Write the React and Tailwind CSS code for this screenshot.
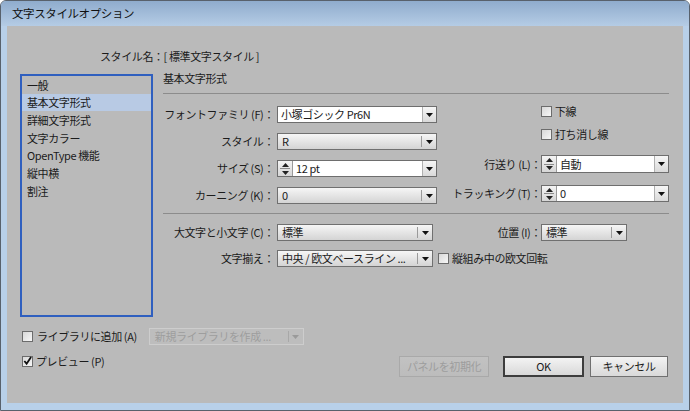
import React from "react";

function Arrow() {
  return (
    <svg width="7" height="4" viewBox="0 0 7 4" className="block">
      <polygon points="0,0 7,0 3.5,4" fill="#111" />
    </svg>
  );
}

function Spinner() {
  return (
    <span className="flex h-full w-[15px] shrink-0 flex-col border-r border-[#9a9a9a] bg-gradient-to-b from-[#f4f4f4] to-[#d6d6d6]">
      <span className="flex flex-1 items-center justify-center">
        <svg width="7" height="4" viewBox="0 0 7 4" className="block">
          <polygon points="0,4 7,4 3.5,0" fill="#222" />
        </svg>
      </span>
      <span className="mx-[2px] h-px bg-[#8a8a8a]" />
      <span className="flex flex-1 items-center justify-center">
        <svg width="7" height="4" viewBox="0 0 7 4" className="block">
          <polygon points="0,0 7,0 3.5,4" fill="#222" />
        </svg>
      </span>
    </span>
  );
}

function Combo({ className, value, spin }) {
  return (
    <div className={"flex h-[17px] shrink-0 items-stretch border border-[#6e6e6e] bg-white " + className}>
      {spin && <Spinner />}
      <span className="flex flex-1 items-center whitespace-nowrap pl-[3px] leading-[15px]">{value}</span>
      <span className="flex w-[14px] shrink-0 items-center justify-center border-l border-[#b0b0b0] bg-gradient-to-b from-[#f6f6f6] to-[#dadada]">
        <Arrow />
      </span>
    </div>
  );
}

function Select({ className, value }) {
  return (
    <div className={"flex h-[17px] shrink-0 items-center border border-[#707070] bg-gradient-to-b from-[#f6f6f6] to-[#d4d4d4] " + className}>
      <span className="flex-1 whitespace-nowrap pl-[4px] leading-[15px]">{value}</span>
      <span className="h-[11px] w-px bg-[#9a9a9a]" />
      <span className="flex w-[14px] shrink-0 items-center justify-center">
        <Arrow />
      </span>
    </div>
  );
}

function Check({ checked }) {
  return (
    <span className="inline-flex h-[11px] w-[11px] shrink-0 items-center justify-center border border-[#6c6c6c] bg-gradient-to-br from-[#d8d8d8] to-[#f7f7f7]">
      {checked && (
        <svg width="10" height="10" viewBox="0 0 10 10" className="block">
          <path d="M1.5 5 L4 8 L9 0.5" fill="none" stroke="#111" strokeWidth="2" />
        </svg>
      )}
    </span>
  );
}

function Label({ className, children }) {
  return (
    <span className={"flex shrink-0 justify-end whitespace-nowrap " + className}>{children}</span>
  );
}

function Button({ className, children, disabled, primary }) {
  let cls = "flex h-[21px] items-center justify-center bg-gradient-to-b ";
  if (disabled) cls += "border border-[#a9a9a9] from-[#c2c2c2] to-[#bcbcbc] text-[#9d9d9d] ";
  else if (primary) cls += "border-2 border-[#3d3d3d] from-[#f3f3f3] to-[#d9d9d9] ";
  else cls += "border border-[#707070] from-[#f3f3f3] to-[#d9d9d9] ";
  return <div className={cls + className}>{children}</div>;
}

const items = ["一般", "基本文字形式", "詳細文字形式", "文字カラー", "OpenType 機能", "縦中横", "割注"];

export default function App() {
  return (
    <div className="h-[411px] w-[690px] overflow-hidden font-['Noto_Sans_CJK_JP',sans-serif] text-[11px] tracking-[-0.4px] text-[#1b1b1b]">
      <div className="flex h-full flex-col rounded-t-[6px] border border-[#58616c] bg-[#b8d0e9]">
        <div className="flex h-[25px] shrink-0 items-center rounded-t-[5px] bg-gradient-to-b from-[#8faccd] to-[#b5cce5] pl-[11px] text-[11.5px] text-[#111]">
          文字スタイルオプション
        </div>
        <div className="mx-[6px] flex h-[377px] flex-col bg-[#bababa] pl-[13px] pr-[15px] pt-[22px]">
          <div className="h-[16px] pl-[80px] leading-[16px]">スタイル名：[ 標準文字スタイル ]</div>

          <div className="mt-[7px] flex h-[246px]">
            <div className="mt-[3px] h-[243px] w-[133px] shrink-0 border-2 border-[#2f5fbf]">
              {items.map((t, i) => (
                <div
                  key={t}
                  className={
                    "flex h-[17.7px] items-center pl-[5px] " + (i === 1 ? "bg-[#b8cae4]" : "")
                  }
                >
                  {t}
                </div>
              ))}
            </div>

            <div className="ml-[10px] flex flex-1 flex-col">
              <div className="h-[14px] leading-[14px]">基本文字形式</div>
              <div className="mt-[8px] border-t border-[#8c8c8c]" />

              <div className="flex h-[119px]">
                <div className="flex w-[274px] flex-col gap-[10px] pt-[12px]">
                  <div className="flex items-center">
                    <Label className="w-[114px] pr-[3px]">フォントファミリ (F)：</Label>
                    <Combo className="w-[160px]" value="小塚ゴシック Pr6N" />
                  </div>
                  <div className="flex items-center">
                    <Label className="w-[114px] pr-[3px]">スタイル：</Label>
                    <Select className="w-[160px]" value="R" />
                  </div>
                  <div className="flex items-center">
                    <Label className="w-[114px] pr-[3px]">サイズ (S)：</Label>
                    <Combo className="w-[160px]" value="12 pt" spin />
                  </div>
                  <div className="flex items-center">
                    <Label className="w-[114px] pr-[3px]">カーニング (K)：</Label>
                    <Select className="w-[160px]" value="0" />
                  </div>
                </div>

                <div className="flex flex-1 flex-col pt-[10px]">
                  <div className="flex h-[14px] items-center pl-[104px]">
                    <Check />
                    <span className="ml-[3px]">下線</span>
                  </div>
                  <div className="mt-[9px] flex h-[14px] items-center pl-[104px]">
                    <Check />
                    <span className="ml-[3px]">打ち消し線</span>
                  </div>
                  <div className="mt-[14px] flex items-center">
                    <Label className="w-[104px]">行送り (L)：</Label>
                    <Combo className="h-[18px] w-[128px]" value="自動" spin />
                  </div>
                  <div className="mt-[12px] flex items-center">
                    <Label className="w-[104px]">トラッキング (T)：</Label>
                    <Combo className="w-[128px]" value="0" spin />
                  </div>
                </div>
              </div>

              <div className="border-t border-[#8c8c8c]" />

              <div className="flex flex-col gap-[9px] pt-[10px]">
                <div className="flex items-center">
                  <Label className="w-[114px] pr-[3px]">大文字と小文字 (C)：</Label>
                  <Select className="w-[156px]" value="標準" />
                  <Label className="w-[108px]">位置 (I)：</Label>
                  <Select className="w-[86px]" value="標準" />
                </div>
                <div className="flex items-center">
                  <Label className="w-[114px] pr-[3px]">文字揃え：</Label>
                  <Select className="w-[156px]" value="中央 / 欧文ベースライン ..." />
                  <span className="ml-[5px] flex items-center whitespace-nowrap">
                    <Check />
                    <span className="ml-[3px]">縦組み中の欧文回転</span>
                  </span>
                </div>
              </div>
            </div>
          </div>

          <div className="flex">
            <div className="flex flex-col pl-[2px] pt-[11px]">
              <div className="flex h-[17px] items-center whitespace-nowrap">
                <Check />
                <span className="ml-[4px]">ライブラリに追加 (A)</span>
                <div className="ml-[12px] flex h-[17px] w-[155px] items-center border border-[#cdcdcd] bg-[#bdbdbd] text-[#9e9e9e]">
                  <span className="flex-1 whitespace-nowrap pl-[5px] leading-[15px]">新規ライブラリを作成 ...</span>
                  <span className="h-[11px] w-px bg-[#a8a8a8]" />
                  <span className="flex w-[14px] items-center justify-center">
                    <svg width="7" height="4" viewBox="0 0 7 4" className="block">
                      <polygon points="0,0 7,0 3.5,4" fill="#9a9a9a" />
                    </svg>
                  </span>
                </div>
              </div>
              <div className="mt-[9px] flex h-[14px] items-center">
                <Check checked />
                <span className="ml-[3px]">プレビュー (P)</span>
              </div>
            </div>
            <div className="ml-auto mt-[39px] flex items-start">
              <Button className="w-[90px]" disabled>パネルを初期化</Button>
              <Button className="ml-[14px] w-[81px]" primary>OK</Button>
              <Button className="ml-[6px] w-[78px]">キャンセル</Button>
            </div>
          </div>
        </div>
      </div>
    </div>
  );
}
